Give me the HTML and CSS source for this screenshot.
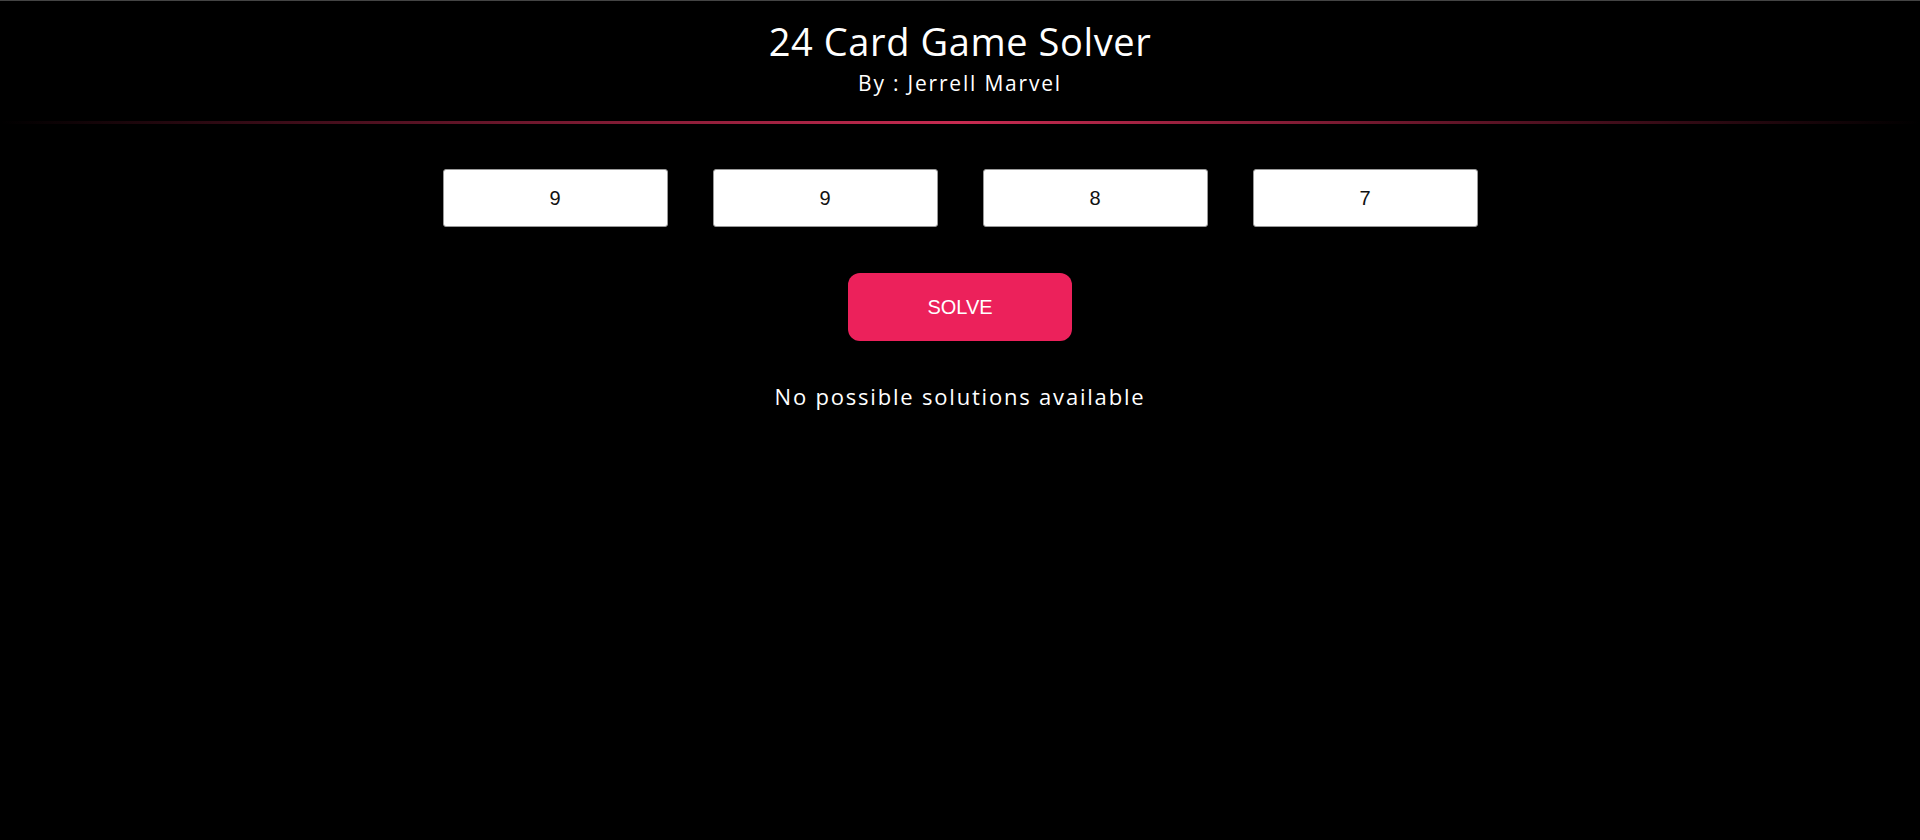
FILE: index.html
```html
<!DOCTYPE html>
<html lang="en">
<head>
<meta charset="utf-8">
<title>24 Card Game Solver</title>
<link rel="stylesheet" href="styles.css">
</head>
<body>
<header class="header">
  <h1 class="title">24 Card Game Solver</h1>
  <p class="author">By : Jerrell Marvel</p>
</header>
<div class="divider"></div>
<main class="main">
  <div class="cards">
    <input class="card" type="text" value="9">
    <input class="card" type="text" value="9">
    <input class="card" type="text" value="8">
    <input class="card" type="text" value="7">
  </div>
  <button class="solve" type="button">SOLVE</button>
  <p class="result">No possible solutions available</p>
</main>
</body>
</html>
```

FILE: styles.css
```css
html, body {
  margin: 0;
  padding: 0;
  background: #000;
  height: 100%;
}

body {
  border-top: 1px solid #444;
  box-sizing: border-box;
  font-family: "Open Sans", "Noto Sans", sans-serif;
  color: #fff;
}

.header {
  text-align: center;
  padding-top: 15px;
}

.title {
  margin: 0;
  font-size: 38px;
  font-weight: 400;
  line-height: 50px;
  letter-spacing: 0.6px;
}

.author {
  margin: 2px 0 0;
  font-size: 21px;
  line-height: 30px;
  letter-spacing: 1.8px;
}

.divider {
  height: 3px;
  margin-top: 23px;
  background: linear-gradient(to right, rgba(200, 40, 80, 0) 0%, rgba(200, 40, 80, 0.3) 15%, rgba(210, 45, 85, 0.95) 50%, rgba(200, 40, 80, 0.3) 85%, rgba(200, 40, 80, 0) 100%);
}

.main {
  display: flex;
  flex-direction: column;
  align-items: center;
}

.cards {
  display: flex;
  gap: 45px;
  margin-top: 45px;
}

.card {
  width: 225px;
  height: 58px;
  box-sizing: border-box;
  border: 1px solid #999;
  border-radius: 3px;
  background: #fff;
  font-family: "Liberation Sans", Arial, sans-serif;
  font-size: 20px;
  color: #111;
  text-align: center;
  padding: 0;
  outline: none;
}

.solve {
  margin-top: 46px;
  width: 224px;
  height: 68px;
  border: none;
  border-radius: 12px;
  background: #ec215b;
  color: #fff;
  font-family: "Liberation Sans", Arial, sans-serif;
  font-size: 20px;
  cursor: pointer;
}

.result {
  margin: 40px 0 0;
  font-size: 22px;
  line-height: 30px;
  letter-spacing: 1.8px;
}
```
